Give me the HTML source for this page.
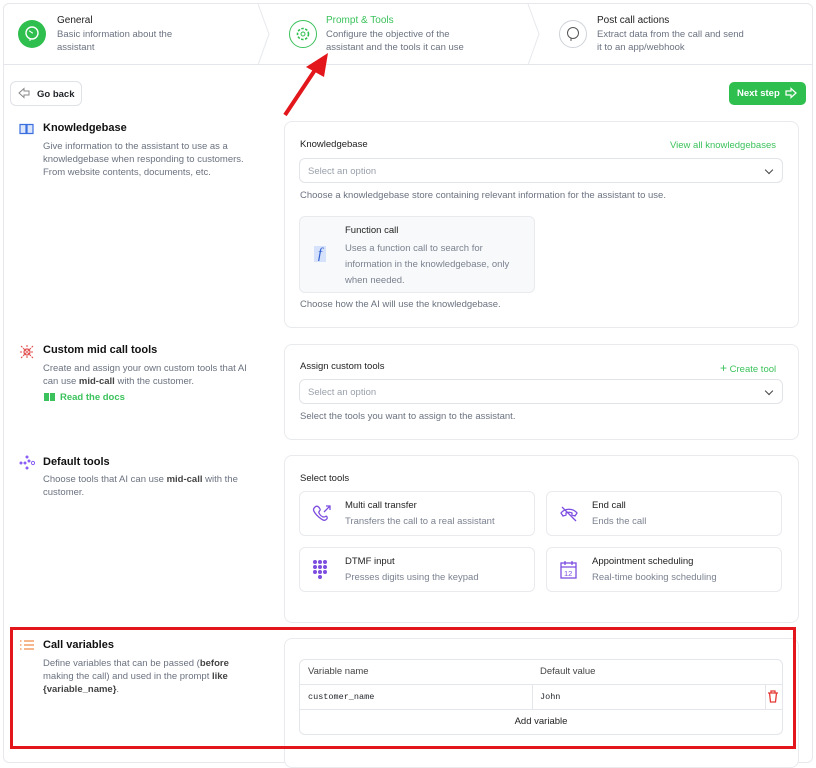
<!DOCTYPE html>
<html><head><meta charset="utf-8"><style>
*{box-sizing:border-box;margin:0;padding:0}
body{width:816px;height:753px;overflow:hidden;background:#fff;font-family:"Liberation Sans",sans-serif;color:#1f2328;position:relative;font-size:10px}
.a{position:absolute}
.frame{left:3px;top:3px;width:810px;height:760px;border:1px solid #e6e8ec;border-radius:6px}
.hdr{left:4px;top:4px;width:808px;height:61px;border-bottom:1px solid #e3e6ea}
.t{font-size:10px;color:#222}
.s{font-size:9.5px;color:#6b7280;line-height:13px}
.circ{width:28px;height:28px;border-radius:50%}
.card{border:1px solid #e8eaee;border-radius:8px;background:#fff}
.sel{border:1px solid #e1e4e8;border-radius:6px;height:25px;font-size:9.5px;color:#9aa1ab;padding:7px 8px}
.sel:after{content:"";position:absolute;right:10px;top:8px;width:5px;height:5px;border-right:1.3px solid #444;border-bottom:1.3px solid #444;transform:rotate(45deg)}
.h{font-size:11px;font-weight:bold;color:#111}
.lbl{font-size:9.5px;color:#222}
.tool{border:1px solid #e8eaee;border-radius:6px;width:236px;height:45px}
.tool .n{position:absolute;left:45px;top:8px;font-size:9.5px;color:#222}
.tool .d{position:absolute;left:45px;top:24px;font-size:9.5px;color:#7b8290}
.tool svg{position:absolute;left:12px;top:12px}
</style></head><body>
<div class="a frame"></div>
<div class="a hdr"></div>
<svg class="a" style="left:255px;top:4px" width="20" height="61"><path d="M3 0 L14 30 L3 61" stroke="#e6e8ec" fill="none"/></svg>
<svg class="a" style="left:525px;top:4px" width="20" height="61"><path d="M3 0 L14 30 L3 61" stroke="#e6e8ec" fill="none"/></svg>
<div class="a circ" style="left:18px;top:20px;background:#2fbf4f"><svg width="28" height="28"><circle cx="14" cy="13" r="6" fill="none" stroke="#fff" stroke-width="1.4"/><path d="M12 18v3M11 11c2 0 2 2 4 2" stroke="#fff" fill="none"/></svg></div>
<div class="a t" style="left:57px;top:15px">General</div>
<div class="a s" style="left:57px;top:28px">Basic information about the<br>assistant</div>
<div class="a circ" style="left:289px;top:20px;border:1px solid #3cc25c"><svg width="26" height="26"><circle cx="13" cy="13" r="5.5" fill="none" stroke="#2fbf4f" stroke-width="1.6" stroke-dasharray="2.5 1.5"/><circle cx="13" cy="13" r="2" fill="none" stroke="#2fbf4f"/></svg></div>
<div class="a t" style="left:326px;top:15px;color:#3cc25c">Prompt &amp; Tools</div>
<div class="a s" style="left:326px;top:28px">Configure the objective of the<br>assistant and the tools it can use</div>
<div class="a circ" style="left:559px;top:20px;border:1px solid #cfd3d8"><svg width="26" height="26"><circle cx="13" cy="12" r="5.5" fill="none" stroke="#555" stroke-width="1"/><path d="M11 17v3" stroke="#555"/></svg></div>
<div class="a t" style="left:597px;top:15px">Post call actions</div>
<div class="a s" style="left:597px;top:28px">Extract data from the call and send<br>it to an app/webhook</div>

<div class="a" style="left:10px;top:81px;width:72px;height:25px;border:1px solid #dfe2e6;border-radius:6px;font-size:9.5px;font-weight:bold;padding:7px 0 0 26px">Go back</div>
<svg class="a" style="left:18px;top:87px" width="12" height="12"><path d="M1 6 L6 1.5 V4 H11 V8 H6 V10.5 Z" fill="none" stroke="#888"/></svg>
<div class="a" style="left:729px;top:82px;width:77px;height:23px;background:#2fbf4f;border-radius:5px;color:#fff;font-size:9.5px;font-weight:bold;padding:6px 0 0 8px">Next step</div>
<svg class="a" style="left:785px;top:87px" width="12" height="12"><path d="M11 6 L6 1.5 V4 H1 V8 H6 V10.5 Z" fill="none" stroke="#fff" stroke-width="1.2"/></svg>

<!-- Knowledgebase -->
<svg class="a" style="left:19px;top:123px" width="16" height="12"><path d="M1 1.5h6v9H1zM8 1.5h6v9H8z" fill="#dbe6fb" stroke="#3b6fe0" stroke-width="1.2"/></svg>
<div class="a h" style="left:43px;top:122px">Knowledgebase</div>
<div class="a s" style="left:43px;top:140px">Give information to the assistant to use as a<br>knowledgebase when responding to customers.<br>From website contents, documents, etc.</div>
<div class="a card" style="left:284px;top:121px;width:515px;height:207px"></div>
<div class="a lbl" style="left:300px;top:139px">Knowledgebase</div>
<div class="a" style="left:670px;top:140px;font-size:9.5px;color:#3cc25c">View all knowledgebases</div>
<div class="a sel" style="left:299px;top:158px;width:484px">Select an option</div>
<div class="a s" style="left:300px;top:189px;color:#6b7280">Choose a knowledgebase store containing relevant information for the assistant to use.</div>
<div class="a" style="left:299px;top:216px;width:236px;height:77px;border:1px solid #e8eaee;border-radius:6px;background:#f8f9fa"></div>
<div class="a" style="left:314px;top:246px;width:12px;height:16px;background:#d6e2fb;color:#2f5fd0;font-size:15px;font-style:italic;font-family:'Liberation Serif',serif;line-height:16px;text-align:center">f</div>
<div class="a lbl" style="left:345px;top:225px">Function call</div>
<div class="a" style="left:345px;top:241px;font-size:9.5px;color:#7b8290;line-height:16px">Uses a function call to search for<br>information in the knowledgebase, only<br>when needed.</div>
<div class="a s" style="left:300px;top:298px">Choose how the AI will use the knowledgebase.</div>

<!-- Custom tools -->
<svg class="a" style="left:19px;top:344px" width="16" height="16"><circle cx="8" cy="8" r="3" fill="none" stroke="#e04848" stroke-width="1.2"/><path d="M2 2l12 12M14 2L2 14M8 1v3M8 12v3M1 8h3M12 8h3" stroke="#e04848" stroke-width="1" stroke-dasharray="2 1"/></svg>
<div class="a h" style="left:43px;top:344px">Custom mid call tools</div>
<div class="a s" style="left:43px;top:362px">Create and assign your own custom tools that AI<br>can use <b style="color:#444">mid-call</b> with the customer.</div>
<div class="a" style="left:44px;top:393px;width:11px;height:8px;background:#3cc25c;border-left:5px solid #3cc25c;box-shadow:inset 1px 0 #fff"></div>
<div class="a" style="left:60px;top:392px;font-size:9.5px;color:#3cc25c;font-weight:bold">Read the docs</div>
<div class="a card" style="left:284px;top:344px;width:515px;height:96px"></div>
<div class="a lbl" style="left:300px;top:361px">Assign custom tools</div>
<div class="a" style="left:720px;top:361px;font-size:9.5px;color:#3cc25c"><span style="font-size:12px">+</span> Create tool</div>
<div class="a sel" style="left:299px;top:379px;width:484px">Select an option</div>
<div class="a s" style="left:300px;top:410px">Select the tools you want to assign to the assistant.</div>

<!-- Default tools -->
<svg class="a" style="left:19px;top:455px" width="16" height="16"><g fill="#8b5cf6"><circle cx="8" cy="2" r="1.5"/><circle cx="10" cy="6" r="1.5"/><circle cx="2" cy="8" r="1.5"/><circle cx="6" cy="8" r="1.5"/><circle cx="8" cy="13" r="1.5"/><circle cx="14" cy="8" r="1.6" fill="none" stroke="#8b5cf6"/></g></svg>
<div class="a h" style="left:43px;top:456px">Default tools</div>
<div class="a s" style="left:43px;top:473px">Choose tools that AI can use <b style="color:#444">mid-call</b> with the<br>customer.</div>
<div class="a card" style="left:284px;top:455px;width:515px;height:168px"></div>
<div class="a lbl" style="left:300px;top:473px">Select tools</div>
<div class="a tool" style="left:299px;top:491px"><svg width="20" height="20"><path d="M3 3c2-2 4 0 5 2s-2 2-1 4 3 4 5 4 2-2 3 0-2 4-4 3S5 12 3 9 1 5 3 3z" fill="none" stroke="#7c4de0" stroke-width="1.3"/><path d="M12 8l6-6M14 2h4v4" fill="none" stroke="#7c4de0" stroke-width="1.3"/></svg><div class="n">Multi call transfer</div><div class="d">Transfers the call to a real assistant</div></div>
<div class="a tool" style="left:546px;top:491px"><svg width="20" height="20"><path d="M2 9c4-5 12-5 16 0l-2 3-3-1v-2c-2-1-4-1-6 0v2l-3 1z" fill="none" stroke="#7c4de0" stroke-width="1.3"/><path d="M3 3l14 14" stroke="#7c4de0" stroke-width="1.3"/></svg><div class="n">End call</div><div class="d">Ends the call</div></div>
<div class="a tool" style="left:299px;top:547px"><svg width="20" height="22"><g fill="#7c4de0"><circle cx="3" cy="2" r="2"/><circle cx="8" cy="2" r="2"/><circle cx="13" cy="2" r="2"/><circle cx="3" cy="7" r="2"/><circle cx="8" cy="7" r="2"/><circle cx="13" cy="7" r="2"/><circle cx="3" cy="12" r="2"/><circle cx="8" cy="12" r="2"/><circle cx="13" cy="12" r="2"/><circle cx="8" cy="17" r="2"/></g></svg><div class="n">DTMF input</div><div class="d">Presses digits using the keypad</div></div>
<div class="a tool" style="left:546px;top:547px"><svg width="20" height="20"><rect x="2" y="3" width="15" height="15" fill="none" stroke="#7c4de0" stroke-width="1.3"/><path d="M2 7h15M6 1v4M13 1v4" stroke="#7c4de0" stroke-width="1.3"/><text x="5" y="16" font-size="7.5" fill="#7c4de0" font-family="Liberation Sans">12</text></svg><div class="n">Appointment scheduling</div><div class="d">Real-time booking scheduling</div></div>

<!-- Call variables -->
<svg class="a" style="left:20px;top:640px" width="14" height="12"><g stroke="#f08a4b" stroke-width="1.2"><path d="M0 1h1.5M4 1h10M0 5h1.5M4 5h10M0 9h1.5M4 9h10"/></g></svg>
<div class="a h" style="left:43px;top:639px">Call variables</div>
<div class="a s" style="left:43px;top:657px">Define variables that can be passed (<b style="color:#444">before</b><br>making the call) and used in the prompt <b style="color:#444">like</b><br><b style="color:#444">{variable_name}</b>.</div>
<div class="a card" style="left:284px;top:638px;width:515px;height:130px"></div>
<div class="a" style="left:299px;top:659px;width:484px;height:76px;border:1px solid #e3e6ea;border-radius:6px"></div>
<div class="a" style="left:300px;top:684px;width:482px;border-top:1px solid #e3e6ea"></div>
<div class="a" style="left:300px;top:709px;width:482px;border-top:1px solid #e3e6ea"></div>
<div class="a" style="left:532px;top:685px;height:24px;border-left:1px solid #e3e6ea"></div>
<div class="a" style="left:765px;top:685px;height:24px;border-left:1px solid #e3e6ea"></div>
<div class="a" style="left:308px;top:666px;font-size:9.5px;color:#444">Variable name</div>
<div class="a" style="left:540px;top:666px;font-size:9.5px;color:#444">Default value</div>
<div class="a" style="left:308px;top:692px;font-size:8.5px;font-family:'Liberation Mono',monospace">customer_name</div>
<div class="a" style="left:540px;top:692px;font-size:8.5px;font-family:'Liberation Mono',monospace">John</div>
<svg class="a" style="left:767px;top:690px" width="12" height="13"><path d="M1 3h10M4 3V1h4v2M2.5 3l1 9h5l1-9" fill="none" stroke="#e53935" stroke-width="1.3"/></svg>
<div class="a" style="left:300px;top:716px;width:482px;text-align:center;font-size:9.5px;color:#222">Add variable</div>

<!-- annotations -->
<div class="a" style="left:10px;top:627px;width:786px;height:122px;border:3px solid #e3161b"></div>
<svg class="a" style="left:280px;top:50px" width="60" height="70"><path d="M5 65 L37 17" stroke="#e3161b" stroke-width="4"/><path d="M48 3 L26 17 L44 27 Z" fill="#e3161b"/></svg>
</body></html>
